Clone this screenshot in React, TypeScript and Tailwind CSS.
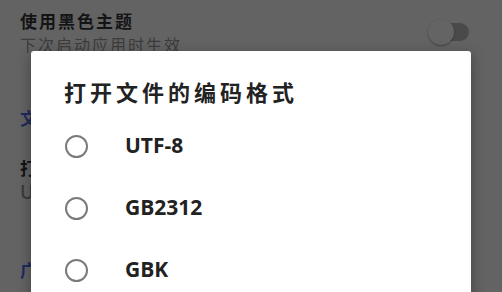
import React from "react";

const encodings = ["UTF-8", "GB2312", "GBK"];

export default function App() {
  return (
    <main
      className="relative h-[292px] w-[502px] overflow-hidden bg-[#636363]"
      style={{ fontFamily: '"Noto Sans CJK SC", "Noto Sans", sans-serif' }}
    >
      {/* 设置页面（被遮罩） */}
      <div className="flex flex-col px-5">
        <div className="flex items-center justify-between pt-[10px]">
          <div className="flex flex-col">
            <span className="text-[17px] font-bold leading-[22px] tracking-[2px] text-[#141414]">
              使用黑色主题
            </span>
            <span className="mt-[2px] text-[16px] leading-[20px] tracking-[2px] text-[#3c3c3c]">
              下次启动应用时生效
            </span>
          </div>
          <div className="relative mr-[13px] flex h-[26px] w-[41px] items-center">
            <div className="ml-[6px] h-[18px] w-[35px] rounded-full bg-[#4a4a4a]" />
            <div className="absolute left-0 top-0 h-[26px] w-[26px] rounded-full bg-[#646464] shadow-[0_1px_2px_rgba(0,0,0,0.35)]" />
          </div>
        </div>

        <span className="mt-[53px] text-[17px] font-bold leading-[22px] tracking-[2px] text-[#1f2a5e]">
          文件
        </span>

        <div className="mt-[27px] flex flex-col gap-[2px]">
          <span className="text-[17px] font-bold leading-[24px] tracking-[2px] text-[#141414]">
            打开
          </span>
          <span
            className="text-[19px] font-semibold leading-[20px] text-[#3a3a3a]"
            style={{ fontFamily: '"Open Sans", sans-serif' }}
          >
            UTF-8
          </span>
        </div>

        <span className="mt-[57px] text-[17px] font-bold leading-[22px] tracking-[2px] text-[#1f2a5e]">
          广告
        </span>
      </div>

      {/* 对话框 */}
      <div className="absolute left-[31px] top-[51px] w-[440px] rounded-t-[3px] bg-white pb-4 shadow-[0_4px_14px_rgba(0,0,0,0.35)]">
        <h2 className="pl-[33px] pt-[25px] text-[22px] font-bold leading-[30px] tracking-[4px] text-[#222]">
          打开文件的编码格式
        </h2>
        <ul className="mt-[9px] flex flex-col">
          {encodings.map((enc) => (
            <li key={enc} className="flex h-[62px] items-center pl-[34px]">
              <span className="h-[23px] w-[23px] rounded-full border-2 border-[#7a7a7a]" />
              <span
                className="ml-[37px] text-[21px] font-bold text-[#222]"
                style={{ fontFamily: '"Open Sans", sans-serif' }}
              >
                {enc}
              </span>
            </li>
          ))}
        </ul>
      </div>
    </main>
  );
}
